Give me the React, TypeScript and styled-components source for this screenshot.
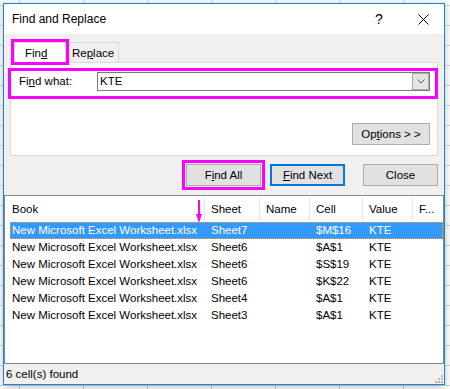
import React from "react";
import styled, { createGlobalStyle } from "styled-components";

const FONT = `"Liberation Sans", Arial, sans-serif`;

const GlobalStyle = createGlobalStyle`
  html, body { margin: 0; padding: 0; }
  body {
    width: 450px;
    height: 389px;
    overflow: hidden;
    background-color: #fff;
    background-image:
      linear-gradient(to right, #d4d4d4 1px, transparent 1px),
      linear-gradient(to bottom, #d4d4d4 1px, transparent 1px);
    background-size: 64px 20px;
    background-position: 19px 5px;
    font-family: ${FONT};
    font-size: 11.5px;
    color: #000;
  }
  * { box-sizing: border-box; }
`;

const Page = styled.div`
  padding: 3px 0 0 3px;
`;

const Dialog = styled.div`
  width: 442px;
  height: 382px;
  border: 1px solid #1883d7;
  background: #f0f0f0;
  display: flex;
  flex-direction: column;
  box-shadow: 0 2px 8px rgba(0, 0, 0, 0.25);
`;

const TitleBar = styled.div`
  height: 30px;
  background: #fff;
  display: flex;
  align-items: center;
  padding-left: 8px;
`;

const Title = styled.div`
  flex: 1;
  font-size: 12px;
  line-height: 16px;
`;

const TitleButton = styled.div<{ $gap?: number }>`
  width: 30px;
  height: 30px;
  display: flex;
  align-items: center;
  justify-content: center;
  font-size: 14px;
  margin-right: ${(p) => p.$gap ?? 0}px;
`;

const TabStrip = styled.div`
  height: 28px;
  display: flex;
  align-items: flex-end;
  padding-left: 10px;
`;

const Tab = styled.div<{ $active?: boolean }>`
  height: 20px;
  line-height: 20px;
  border: 1px solid #d9d9d9;
  border-bottom: none;
  background: ${(p) => (p.$active ? "#fff" : "#f0f0f0")};
  width: ${(p) => (p.$active ? 52 : 50)}px;
  padding-left: ${(p) => (p.$active ? 10 : 2)}px;
  margin-left: ${(p) => (p.$active ? 0 : 3)}px;
  outline: ${(p) => (p.$active ? "3px solid #f0f" : "none")};
  position: relative;
  z-index: ${(p) => (p.$active ? 2 : 1)};
`;

const Panel = styled.div`
  margin: 0 6px;
  height: 94px;
  background: #fff;
  border: 1px solid #d9d9d9;
  display: flex;
  flex-direction: column;
`;

const FindRow = styled.div`
  height: 25px;
  margin: 8px 2px 0 0;
  padding-top: 1px;
  outline: 3px solid #f0f;
  display: flex;
  align-items: flex-start;
`;

const Label = styled.div`
  width: 86px;
  padding-left: 8px;
  line-height: 19px;
`;

const Combo = styled.div`
  width: 333px;
  height: 19px;
  border: 1px solid #7a7a7a;
  background: #fff;
  display: flex;
`;

const ComboText = styled.div`
  flex: 1;
  padding-left: 2px;
  line-height: 17px;
`;

const DropButton = styled.div`
  width: 17px;
  height: 17px;
  background: #e5e5e5;
  border: 1px solid #adadad;
  display: flex;
  align-items: center;
  justify-content: center;
`;

const Button = styled.button<{ $width?: number; $highlight?: boolean; $focused?: boolean; $gapBefore?: number }>`
  width: ${(p) => p.$width ?? 75}px;
  height: 22px;
  padding: 0;
  background: #e1e1e1;
  border: ${(p) => (p.$focused ? "2px solid #0078d7" : "1px solid #adadad")};
  font-family: ${FONT};
  font-size: 11.5px;
  color: #000;
  outline: ${(p) => (p.$highlight ? "3px solid #f0f" : "none")};
  outline-offset: 1px;
  margin-left: ${(p) => p.$gapBefore ?? 0}px;
  line-height: 18px;
`;

const OptionsButton = styled(Button)`
  align-self: flex-end;
  margin: 27px 7px 0 0;
`;

const ButtonRow = styled.div`
  display: flex;
  justify-content: flex-end;
  padding: 8px 6px 0;
`;

const List = styled.div`
  margin-top: 9px;
  flex: 1;
  border: 1px solid #828790;
  background: #fff;
  position: relative;
`;

const HeaderRow = styled.div`
  display: grid;
  grid-template-columns: 200px 55px 50px 53px 50px 1fr;
  height: 26px;
  align-items: center;
`;

const HeaderCell = styled.div<{ $first?: boolean; $last?: boolean }>`
  height: 22px;
  line-height: 22px;
  padding-left: ${(p) => (p.$first ? 7 : 6)}px;
  border-right: ${(p) => (p.$last ? "none" : "1px solid #e5e5e5")};
  white-space: nowrap;
`;

const DataRow = styled.div<{ $selected?: boolean }>`
  display: grid;
  grid-template-columns: 195px 55px 50px 53px 50px 1fr;
  margin-left: 5px;
  height: 17px;
  line-height: 17px;
  background: ${(p) => (p.$selected ? "#3399ff" : "transparent")};
  color: ${(p) => (p.$selected ? "#fff" : "#000")};
  outline: ${(p) => (p.$selected ? "1px dotted #e8a040" : "none")};
  outline-offset: -1px;
`;

const DataCell = styled.div<{ $first?: boolean }>`
  padding-left: ${(p) => (p.$first ? 2 : 6)}px;
  white-space: nowrap;
  overflow: hidden;
`;

const Arrow = styled.svg`
  position: absolute;
  left: 189px;
  top: 4px;
`;

const StatusBar = styled.div`
  height: 20px;
  display: flex;
  align-items: center;
  justify-content: space-between;
  padding-left: 2px;
`;

const Grip = styled.svg`
  align-self: flex-end;
  margin: 0 1px 1px 0;
`;

const rows = [
  ["Sheet7", "$M$16"],
  ["Sheet6", "$A$1"],
  ["Sheet6", "$S$19"],
  ["Sheet6", "$K$22"],
  ["Sheet4", "$A$1"],
  ["Sheet3", "$A$1"],
];

export default function App() {
  return (
    <>
      <GlobalStyle />
      <Page>
        <Dialog>
          <TitleBar>
            <Title>Find and Replace</Title>
            <TitleButton $gap={14}>?</TitleButton>
            <TitleButton $gap={6}>
              <svg width="11" height="11" viewBox="0 0 11 11">
                <path d="M0.5 0.5 L10.5 10.5 M10.5 0.5 L0.5 10.5" stroke="#000" strokeWidth="1" />
              </svg>
            </TitleButton>
          </TitleBar>
          <TabStrip>
            <Tab $active>
              Fin<u>d</u>
            </Tab>
            <Tab>
              Re<u>p</u>lace
            </Tab>
          </TabStrip>
          <Panel>
            <FindRow>
              <Label>
                Fi<u>n</u>d what:
              </Label>
              <Combo>
                <ComboText>KTE</ComboText>
                <DropButton>
                  <svg width="8" height="5" viewBox="0 0 8 5">
                    <path d="M0.5 0.5 L4 4 L7.5 0.5" stroke="#555" strokeWidth="1" fill="none" />
                  </svg>
                </DropButton>
              </Combo>
            </FindRow>
            <OptionsButton $width={78}>
              Op<u>t</u>ions &gt; &gt;
            </OptionsButton>
          </Panel>
          <ButtonRow>
            <Button $highlight>
              F<u>i</u>nd All
            </Button>
            <Button $focused $gapBefore={9}>
              <u>F</u>ind Next
            </Button>
            <Button $gapBefore={18}>Close</Button>
          </ButtonRow>
          <List>
            <HeaderRow>
              <HeaderCell $first>Book</HeaderCell>
              <HeaderCell>Sheet</HeaderCell>
              <HeaderCell>Name</HeaderCell>
              <HeaderCell>Cell</HeaderCell>
              <HeaderCell>Value</HeaderCell>
              <HeaderCell $last>F...</HeaderCell>
            </HeaderRow>
            {rows.map(([sheet, cell], i) => (
              <DataRow key={i} $selected={i === 0}>
                <DataCell $first>New Microsoft Excel Worksheet.xlsx</DataCell>
                <DataCell>{sheet}</DataCell>
                <DataCell></DataCell>
                <DataCell>{cell}</DataCell>
                <DataCell>KTE</DataCell>
                <DataCell></DataCell>
              </DataRow>
            ))}
            <Arrow width="10" height="23" viewBox="0 0 10 23">
              <rect x="4" y="0" width="2" height="15" fill="#f0f" />
              <polygon points="2,14 8,14 5,23" fill="#f0f" />
            </Arrow>
          </List>
          <StatusBar>
            <span>6 cell(s) found</span>
            <Grip width="8" height="8" viewBox="0 0 8 8">
              <rect x="6" y="0" width="2" height="2" fill="#b8b8b8" />
              <rect x="3" y="3" width="2" height="2" fill="#b8b8b8" />
              <rect x="6" y="3" width="2" height="2" fill="#b8b8b8" />
              <rect x="0" y="6" width="2" height="2" fill="#b8b8b8" />
              <rect x="3" y="6" width="2" height="2" fill="#b8b8b8" />
              <rect x="6" y="6" width="2" height="2" fill="#b8b8b8" />
            </Grip>
          </StatusBar>
        </Dialog>
      </Page>
    </>
  );
}
